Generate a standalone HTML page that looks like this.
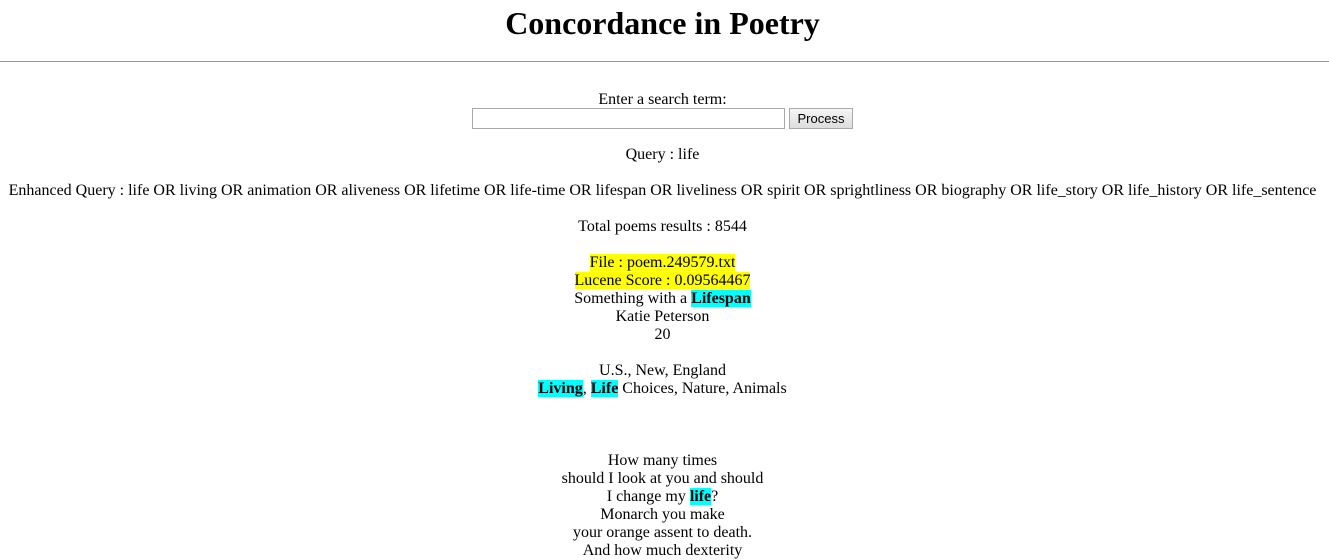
<!DOCTYPE html>
<html><head><style>
body{margin:0;width:1329px;height:559px;overflow:hidden;background:#fff;font-family:"Liberation Serif",serif;font-size:16px;color:#000;position:relative}
.c{position:absolute;left:-2px;width:1329px;text-align:center;line-height:18px}
h1{position:absolute;top:1px;left:-2px;width:1329px;margin:0;text-align:center;font-size:32px;line-height:44px;font-weight:bold}
hr{position:absolute;top:61px;left:0;width:1329px;margin:0;border:0;border-top:1px solid #999;height:0}
.y{background:#ffff00}.b{background:#00ffff;font-weight:bold}
input{position:absolute;top:108px;left:472px;width:313px;height:21px;box-sizing:border-box;border:1px solid #a9a9a9;margin:0;padding:0}
button{position:absolute;top:108px;left:789px;width:64px;height:21px;box-sizing:border-box;border:1px solid #aaa;background:linear-gradient(#f6f6f6,#ddd);font-family:"Liberation Sans",sans-serif;font-size:13px;padding:0;margin:0}
</style></head><body>
<h1>Concordance in Poetry</h1>
<hr>
<div class="c" style="top:91px">Enter a search term:</div>
<input type="text"><button>Process</button>
<div class="c" style="top:146px">Query : life</div>
<div class="c" style="top:182px">Enhanced Query : life OR living OR animation OR aliveness OR lifetime OR life-time OR lifespan OR liveliness OR spirit OR sprightliness OR biography OR life_story OR life_history OR life_sentence</div>
<div class="c" style="top:218px">Total poems results : 8544</div>
<div class="c" style="top:254px"><span class="y">File : poem.249579.txt</span><br><span class="y">Lucene Score : 0.09564467</span><br>Something with a <span class="b">Lifespan</span><br>Katie Peterson<br>20<br><br>U.S., New, England<br><span class="b">Living</span>, <span class="b">Life</span> Choices, Nature, Animals<br><br><br><br>How many times<br>should I look at you and should<br>I change my <span class="b">life</span>?<br>Monarch you make<br>your orange assent to death.<br>And how much dexterity</div>
</body></html>
